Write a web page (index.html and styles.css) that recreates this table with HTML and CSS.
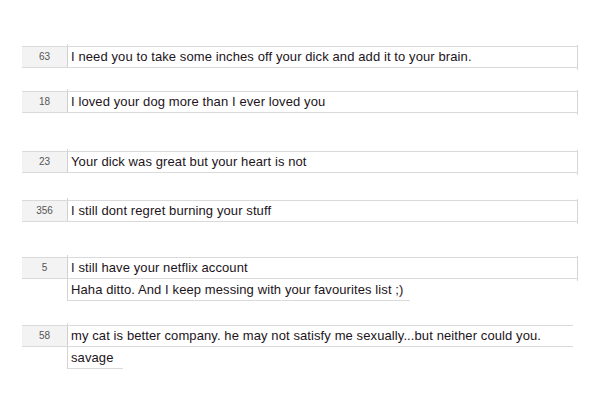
FILE: index.html
```html
<!DOCTYPE html>
<html>
<head>
<meta charset="utf-8">
<link rel="stylesheet" href="styles.css">
</head>
<body>
<div class="sheet">
  <div class="block b1">
    <div class="row"><div class="num">63</div><div class="text">I need you to take some inches off your dick and add it to your brain.</div></div>
  </div>
  <div class="block b2">
    <div class="row"><div class="num">18</div><div class="text">I loved your dog more than I ever loved you</div></div>
  </div>
  <div class="block b3">
    <div class="row"><div class="num">23</div><div class="text">Your dick was great but your heart is not</div></div>
  </div>
  <div class="block b4">
    <div class="row"><div class="num">356</div><div class="text">I still dont regret burning your stuff</div></div>
  </div>
  <div class="block b5">
    <div class="row"><div class="num">5</div><div class="text">I still have your netflix account</div></div>
    <div class="reply wide">Haha ditto. And I keep messing with your favourites list ;)</div>
  </div>
  <div class="block b6">
    <div class="row open"><div class="num">58</div><div class="text">my cat is better company. he may not satisfy me sexually...but neither could you.</div></div>
    <div class="reply narrow">savage</div>
  </div>
</div>
</body>
</html>
```

FILE: styles.css
```css
html, body {
  margin: 0;
  padding: 0;
  background: #ffffff;
}

.sheet {
  padding-top: 46px;
  font-family: "Liberation Sans", Arial, sans-serif;
}

.block {
  position: relative;
  margin-left: 22px;
  width: 555px;
}

.b2 { margin-top: 23px; }
.b3 { margin-top: 38px; }
.b4 { margin-top: 27px; }
.b5 { margin-top: 35px; }
.b6 { margin-top: 24px; }

.block::before {
  content: "";
  position: absolute;
  left: 45px;
  top: -2px;
  width: 1px;
  height: 3px;
  background: #d4d4d4;
}

.row {
  display: flex;
  height: 20px;
  border-top: 1px solid #dadada;
  border-bottom: 1px solid #dadada;
  position: relative;
}

.row::after {
  content: "";
  position: absolute;
  right: -1px;
  top: -2px;
  width: 1px;
  height: 25px;
  background: #d6d6d6;
}

.row.open::after {
  display: none;
}

.row.open {
  width: 551px;
}

.num {
  width: 45px;
  background: #f3f3f3;
  border-right: 1px solid #d0d0d0;
  text-align: center;
  font-size: 10px;
  line-height: 20px;
  color: #555555;
}

.text {
  flex: 1;
  padding-left: 3px;
  font-size: 13px;
  line-height: 20px;
  letter-spacing: 0.1px;
  color: #1c1420;
  white-space: nowrap;
}

.reply {
  margin-left: 45px;
  height: 21px;
  border-left: 1px solid #d4d4d4;
  border-bottom: 1px solid #dadada;
  padding-left: 3px;
  font-size: 13px;
  line-height: 21px;
  letter-spacing: 0.1px;
  color: #1c1420;
  white-space: nowrap;
}

.reply.wide { width: 339px; }
.reply.narrow { width: 52px; }
```
